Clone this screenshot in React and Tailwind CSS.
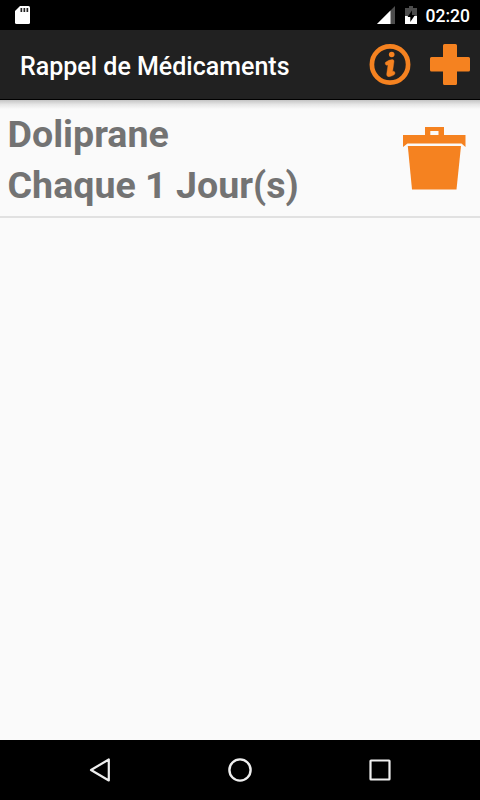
import React from "react";

function StatusBar() {
  return (
    <div className="flex h-[30px] items-center justify-between bg-black pl-[15px] pr-[10px]">
      <svg width="15" height="18" viewBox="0 0 15 18" className="shrink-0">
        <path d="M5 0H13.5Q15 0 15 1.500V16.500Q15 18 13.500 18H1.500Q0 18 0 16.500V5Z" fill="#fff" />
        <path d="M5.500 2h1.700v4h-1.700zM8.500 2h1.700v4h-1.700zM11.500 2h1.700v4h-1.700z" fill="#222" />
      </svg>
      <div className="flex items-center">
        <svg width="18" height="18" viewBox="0 0 18 18">
          <path d="M18 0V18H0Z" fill="#4d4d4d" />
          <path d="M13.500 4.500V18H0Z" fill="#fff" />
        </svg>
        <svg width="12" height="18" viewBox="0 0 12 18" className="ml-[10px]">
          <path d="M4 0h4v2h4v16H0V2h4z" fill="#4d4d4d" />
          <path d="M0 10h12v8H0z" fill="#fff" />
          <path d="M7 4.500L2.500 11H5.300v5L10 9H7z" fill="#000" />
        </svg>
        <span className="ml-[9px] pt-[2px] text-[17.5px] leading-[28px] font-medium text-white">02:20</span>
      </div>
    </div>
  );
}

function InfoIcon() {
  return (
    <svg width="42" height="42" viewBox="0 0 42 42">
      <circle cx="21" cy="20.500" r="18.100" fill="none" stroke="#f58220" strokeWidth="4.700" />
      <circle cx="22.700" cy="10.500" r="2.800" fill="#f58220" />
      <path d="M17 18Q19.500 15.800 23.300 15.600Q25.200 15.700 25 17.500L23.600 27.600L24.800 27.300Q26.300 27.700 25.900 29.800Q25.400 31 23.700 31.600Q20.500 33.200 18.800 32.400Q17.400 31.800 17.700 30L19 21L17.500 21.200Q15.900 20.600 16.200 19Q16.400 18.200 17 18Z" fill="#f58220" stroke="#f58220" strokeWidth="0.400" />
    </svg>
  );
}

function PlusIcon() {
  return (
    <svg width="40" height="41" viewBox="0 0 40 41">
      <path d="M14.500 0H25.500Q27 0 27 1.500V13H38.500Q40 13 40 14.500V26Q40 27.500 38.500 27.500H27V39.500Q27 41 25.500 41H14.500Q13 41 13 39.500V27.500H1.500Q0 27.500 0 26V14.500Q0 13 1.500 13H13V1.500Q13 0 14.500 0Z" fill="#f58220" />
    </svg>
  );
}

function TrashIcon() {
  return (
    <svg width="63" height="63" viewBox="0 0 63 63" className="shrink-0">
      <path fillRule="evenodd" d="M22 0H41V8H62.500V20L58.500 16.500H4.500L0 20V8H22ZM27.300 4V8H35.500V4Z" fill="#f58220" />
      <path d="M4.800 19H58L53.500 62.500H9Z" fill="#f58220" />
    </svg>
  );
}

function NavBar() {
  return (
    <nav className="flex h-[60px] items-center justify-center gap-[116px] bg-black">
      <svg width="24" height="24" viewBox="0 0 24 24" fill="none" stroke="#eee" strokeWidth="2.200" strokeLinejoin="round">
        <path d="M20.800 1.500V22.500L3 12Z" />
      </svg>
      <svg width="24" height="24" viewBox="0 0 24 24" fill="none" stroke="#eee" strokeWidth="2.400">
        <circle cx="12" cy="12" r="10.600" />
      </svg>
      <svg width="24" height="24" viewBox="0 0 24 24" fill="none" stroke="#eee" strokeWidth="2.200">
        <rect x="2.500" y="2.500" width="19" height="19" rx="0.500" />
      </svg>
    </nav>
  );
}

export default function App() {
  return (
    <div className="flex h-[800px] w-[480px] flex-col overflow-hidden bg-[#fafafa] font-[Roboto,sans-serif]">
      <StatusBar />
      <header className="flex h-[70px] items-center border-b border-black bg-[#212121] pl-[20px] pr-[10px]">
        <h1 className="flex-1 pt-[5px] text-[25px] leading-[30px] font-medium whitespace-nowrap text-white">Rappel de Médicaments</h1>
        <InfoIcon />
        <div className="ml-[19px]">
          <PlusIcon />
        </div>
      </header>
      <div className="h-[9px] shrink-0 bg-linear-to-b from-[#c4c4c4] via-[#e6e6e6] to-[#fafafa]" />
      <main className="flex-1">
        <div className="flex h-[109px] items-start justify-between border-b-2 border-[#e1e1e1] pl-[7.5px] pr-[14.5px]">
          <div className="text-[37.6px] leading-[51px] font-bold whitespace-nowrap text-[#737373]">
            <p>Doliprane</p>
            <p>Chaque 1 Jour(s)</p>
          </div>
          <div className="pt-[18px]">
            <TrashIcon />
          </div>
        </div>
      </main>
      <NavBar />
    </div>
  );
}
